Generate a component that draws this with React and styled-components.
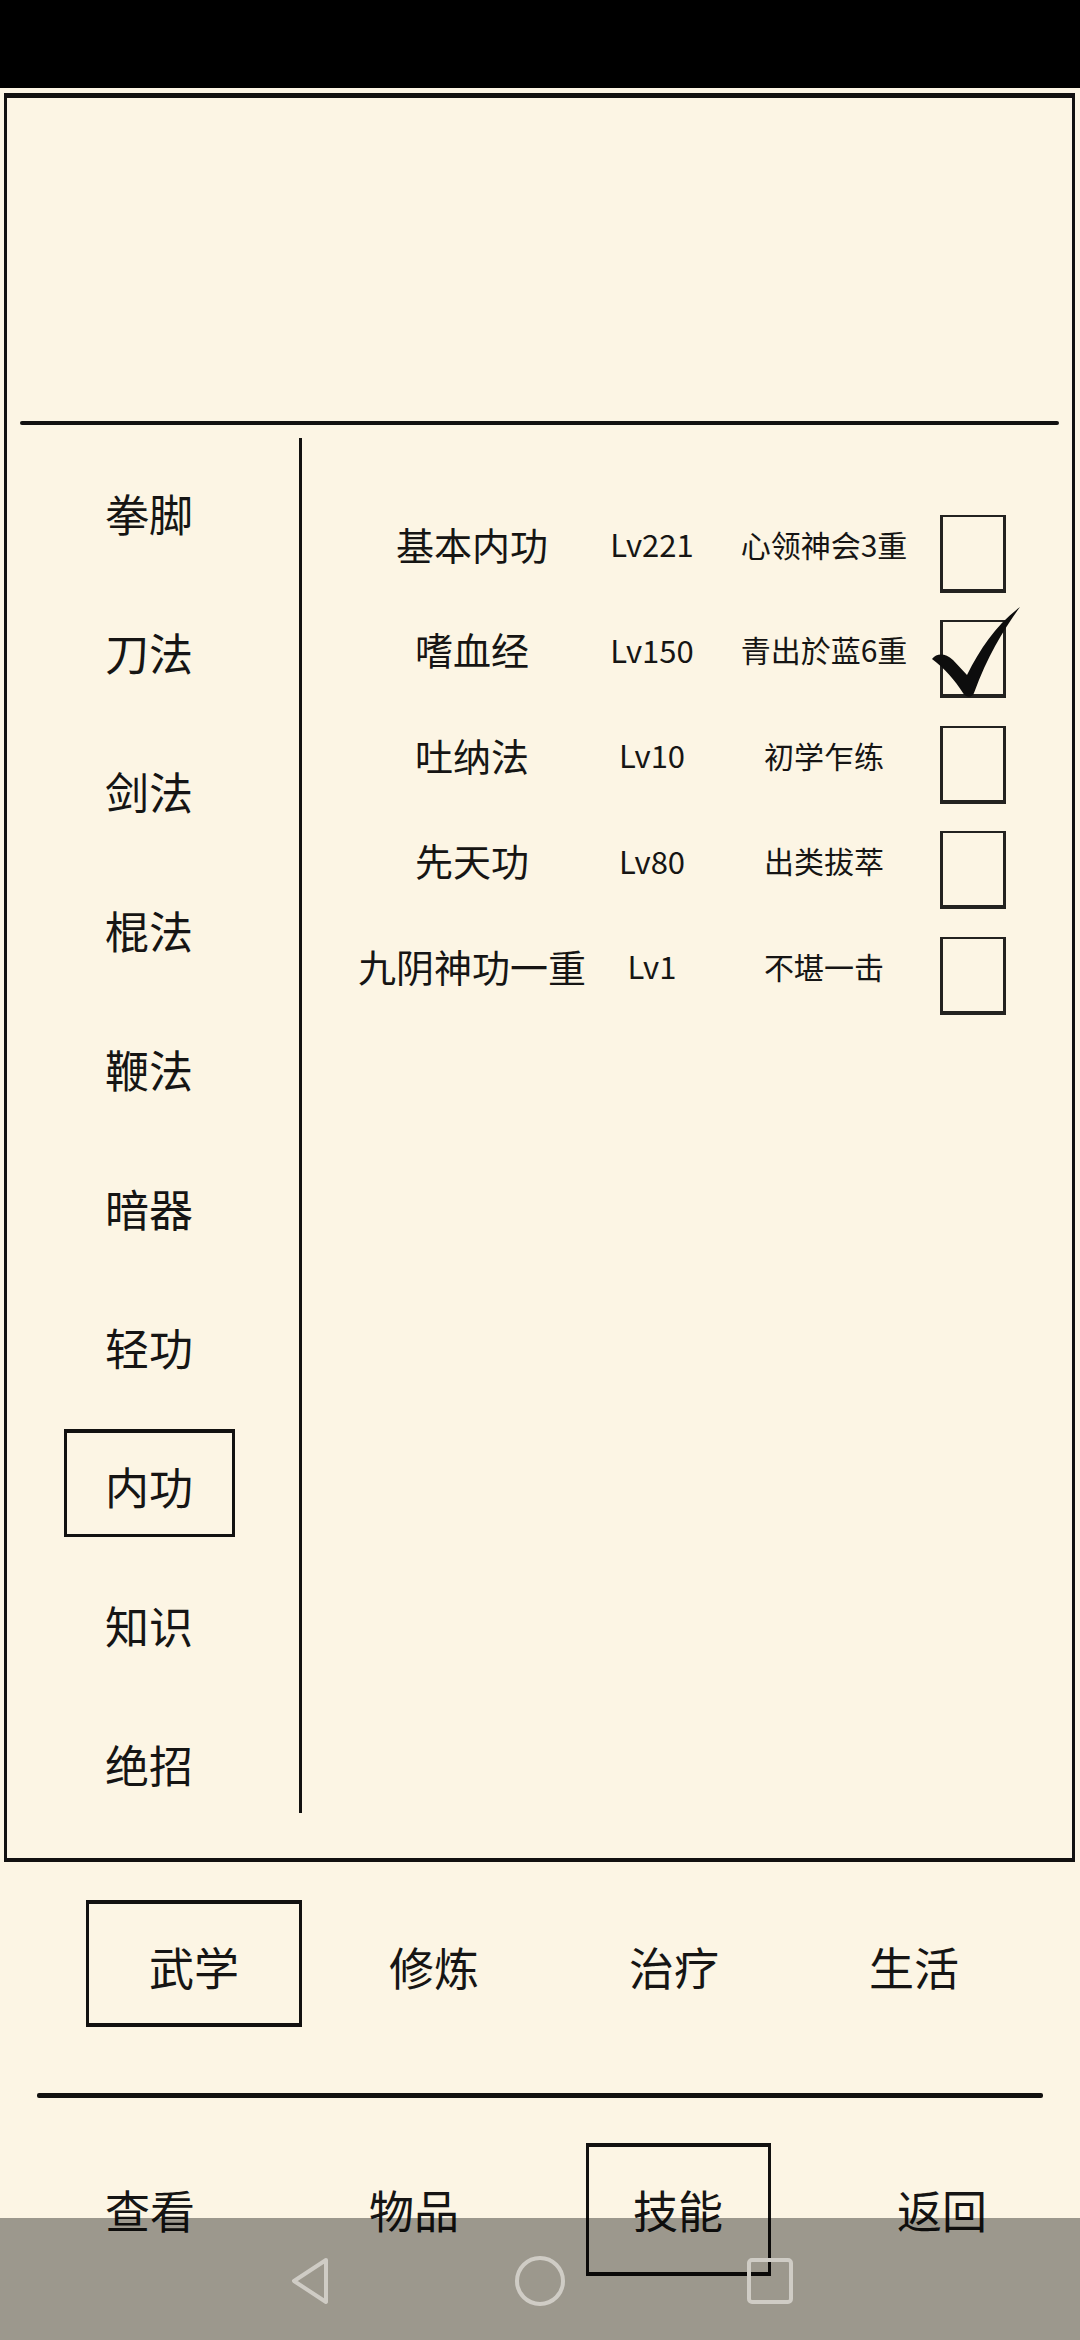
import React from "react";
import styled, { createGlobalStyle } from "styled-components";

const Global = createGlobalStyle`
  html, body { margin: 0; padding: 0; background: #fcf5e4; }
  * { box-sizing: border-box; }
`;

const INK = "#121110";

const Screen = styled.div`
  position: relative;
  width: 1080px;
  height: 2340px;
  overflow: hidden;
  background: #fcf5e4;
  display: flex;
  flex-direction: column;
  font-family: "Noto Sans CJK SC", "Noto Sans", sans-serif;
  color: #161514;
`;

const StatusBar = styled.div`
  flex: none;
  height: 88px;
  background: #000;
`;

const Frame = styled.section`
  flex: none;
  height: 1769px;
  margin: 5px 5px 0 4px;
  border: 3px solid ${INK};
  border-top-width: 5px;
  border-bottom-width: 4px;
  display: flex;
  flex-direction: column;
`;

const TopBlank = styled.div`
  flex: none;
  height: 323px;
`;

const Rule = styled.div`
  flex: none;
  height: ${(p) => p.$h || 3}px;
  margin: ${(p) => p.$m || "0 13px"};
  background: ${INK};
  border-radius: 2px;
`;

const Body = styled.div`
  flex: 1;
  display: flex;
  padding-top: 13px;
`;

const Sidebar = styled.nav`
  flex: none;
  width: 292px;
  padding: 2px 8px 0 0;
  display: flex;
  flex-direction: column;
`;

const SideSlot = styled.div`
  height: 139px;
  display: flex;
  align-items: center;
  justify-content: center;
`;

const SideItem = styled.div`
  width: 171px;
  height: 108px;
  display: flex;
  align-items: center;
  justify-content: center;
  font-size: 44px;
  line-height: 1;
  padding-top: 5px;
  border: 3px solid ${(p) => (p.$active ? INK : "transparent")};
  border-top-width: 4px;
`;

const Divider = styled.div`
  flex: none;
  width: 3px;
  height: 1375px;
  background: ${INK};
`;

const SkillList = styled.div`
  flex: 1;
  padding: 63px 0 0 50px;
  display: flex;
  flex-direction: column;
`;

const SkillRow = styled.div`
  height: 105.5px;
  display: grid;
  grid-template-columns: 240px 120px 224px 74px;
  align-items: center;
`;

const Cell = styled.div`
  text-align: center;
  white-space: nowrap;
  line-height: 1;
  font-size: ${(p) => p.$size}px;
  padding-bottom: 20px;
`;

const CheckCell = styled.div`
  display: flex;
  justify-content: center;
`;

const CheckBox = styled.div`
  position: relative;
  width: 66px;
  height: 78px;
  border: 3px solid #232220;
  border-top-width: 2px;
  border-bottom-width: 4px;
`;

const CheckMark = styled.svg`
  position: absolute;
  left: -13px;
  top: -15px;
  width: 92px;
  height: 92px;
  overflow: visible;
`;

const TabRow = styled.div`
  flex: none;
  display: grid;
  grid-template-columns: repeat(4, ${(p) => p.$col}px);
  margin: ${(p) => p.$m};
`;

const Tab = styled.div`
  justify-self: center;
  width: ${(p) => p.$w}px;
  height: ${(p) => p.$h}px;
  display: flex;
  align-items: center;
  justify-content: center;
  font-size: 45px;
  line-height: 1;
  padding-top: ${(p) => p.$pt || 0}px;
  border: 3px solid ${(p) => (p.$active ? INK : "transparent")};
  border-top-width: 4px;
  border-bottom-width: 4px;
`;

const NavBar = styled.div`
  position: absolute;
  left: 0;
  right: 0;
  bottom: 0;
  height: 122px;
  background: rgba(0, 0, 0, 0.38);
  display: flex;
  align-items: center;
  justify-content: center;
`;

const NavSlot = styled.div`
  width: 230px;
  display: flex;
  justify-content: center;
  padding-top: 3px;
`;

const menu = ["拳脚", "刀法", "剑法", "棍法", "鞭法", "暗器", "轻功", "内功", "知识", "绝招"];

const skills = [
  { name: "基本内功", lv: "Lv221", st: "心领神会3重", on: false },
  { name: "嗜血经", lv: "Lv150", st: "青出於蓝6重", on: true },
  { name: "吐纳法", lv: "Lv10", st: "初学乍练", on: false },
  { name: "先天功", lv: "Lv80", st: "出类拔萃", on: false },
  { name: "九阴神功一重", lv: "Lv1", st: "不堪一击", on: false },
];

const tabs1 = ["武学", "修炼", "治疗", "生活"];
const tabs2 = ["查看", "物品", "技能", "返回"];

export default function App() {
  return (
    <>
      <Global />
      <Screen>
        <StatusBar />
        <Frame>
          <TopBlank />
          <Rule $h={4} $m="0 13px 0 13px" />
          <Body>
            <Sidebar>
              {menu.map((m) => (
                <SideSlot key={m}>
                  <SideItem $active={m === "内功"}>{m}</SideItem>
                </SideSlot>
              ))}
            </Sidebar>
            <Divider />
            <SkillList>
              {skills.map((s) => (
                <SkillRow key={s.name}>
                  <Cell $size={38}>{s.name}</Cell>
                  <Cell $size={31}>{s.lv}</Cell>
                  <Cell $size={30}>{s.st}</Cell>
                  <CheckCell>
                    <CheckBox>
                      {s.on && (
                        <CheckMark viewBox="0 0 92 92">
                          <path
                            d="M2 52 C 7 46, 15 46, 23 53 L 37 68 C 50 42, 66 18, 90 0 C 74 22, 58 48, 44 86 C 42 91, 36 91, 33 86 C 25 73, 14 61, 2 52 Z"
                            fill="#0d0d0d"
                          />
                        </CheckMark>
                      )}
                    </CheckBox>
                  </CheckCell>
                </SkillRow>
              ))}
            </SkillList>
          </Body>
        </Frame>
        <TabRow $col={240} $m="38px 0 0 74px">
          {tabs1.map((t) => (
            <Tab key={t} $w={216} $h={127} $pt={6} $active={t === "武学"}>
              {t}
            </Tab>
          ))}
        </TabRow>
        <Rule $h={5} $m="66px 37px 0 37px" />
        <TabRow $col={264} $m="45px 0 0 18px">
          {tabs2.map((t) => (
            <Tab key={t} $w={185} $h={133} $pt={0} $active={t === "技能"}>
              {t}
            </Tab>
          ))}
        </TabRow>
        <NavBar>
          <NavSlot>
            <svg width="44" height="50" viewBox="0 0 44 50">
              <path d="M38 4 L6 25 L38 46 Z" fill="none" stroke="#cfccc5" strokeWidth="4" strokeLinejoin="round" />
            </svg>
          </NavSlot>
          <NavSlot>
            <svg width="52" height="52" viewBox="0 0 52 52">
              <circle cx="26" cy="26" r="23" fill="none" stroke="#cfccc5" strokeWidth="4" />
            </svg>
          </NavSlot>
          <NavSlot>
            <svg width="48" height="48" viewBox="0 0 48 48">
              <rect x="3" y="3" width="42" height="42" rx="3" fill="none" stroke="#cfccc5" strokeWidth="4" />
            </svg>
          </NavSlot>
        </NavBar>
      </Screen>
    </>
  );
}
